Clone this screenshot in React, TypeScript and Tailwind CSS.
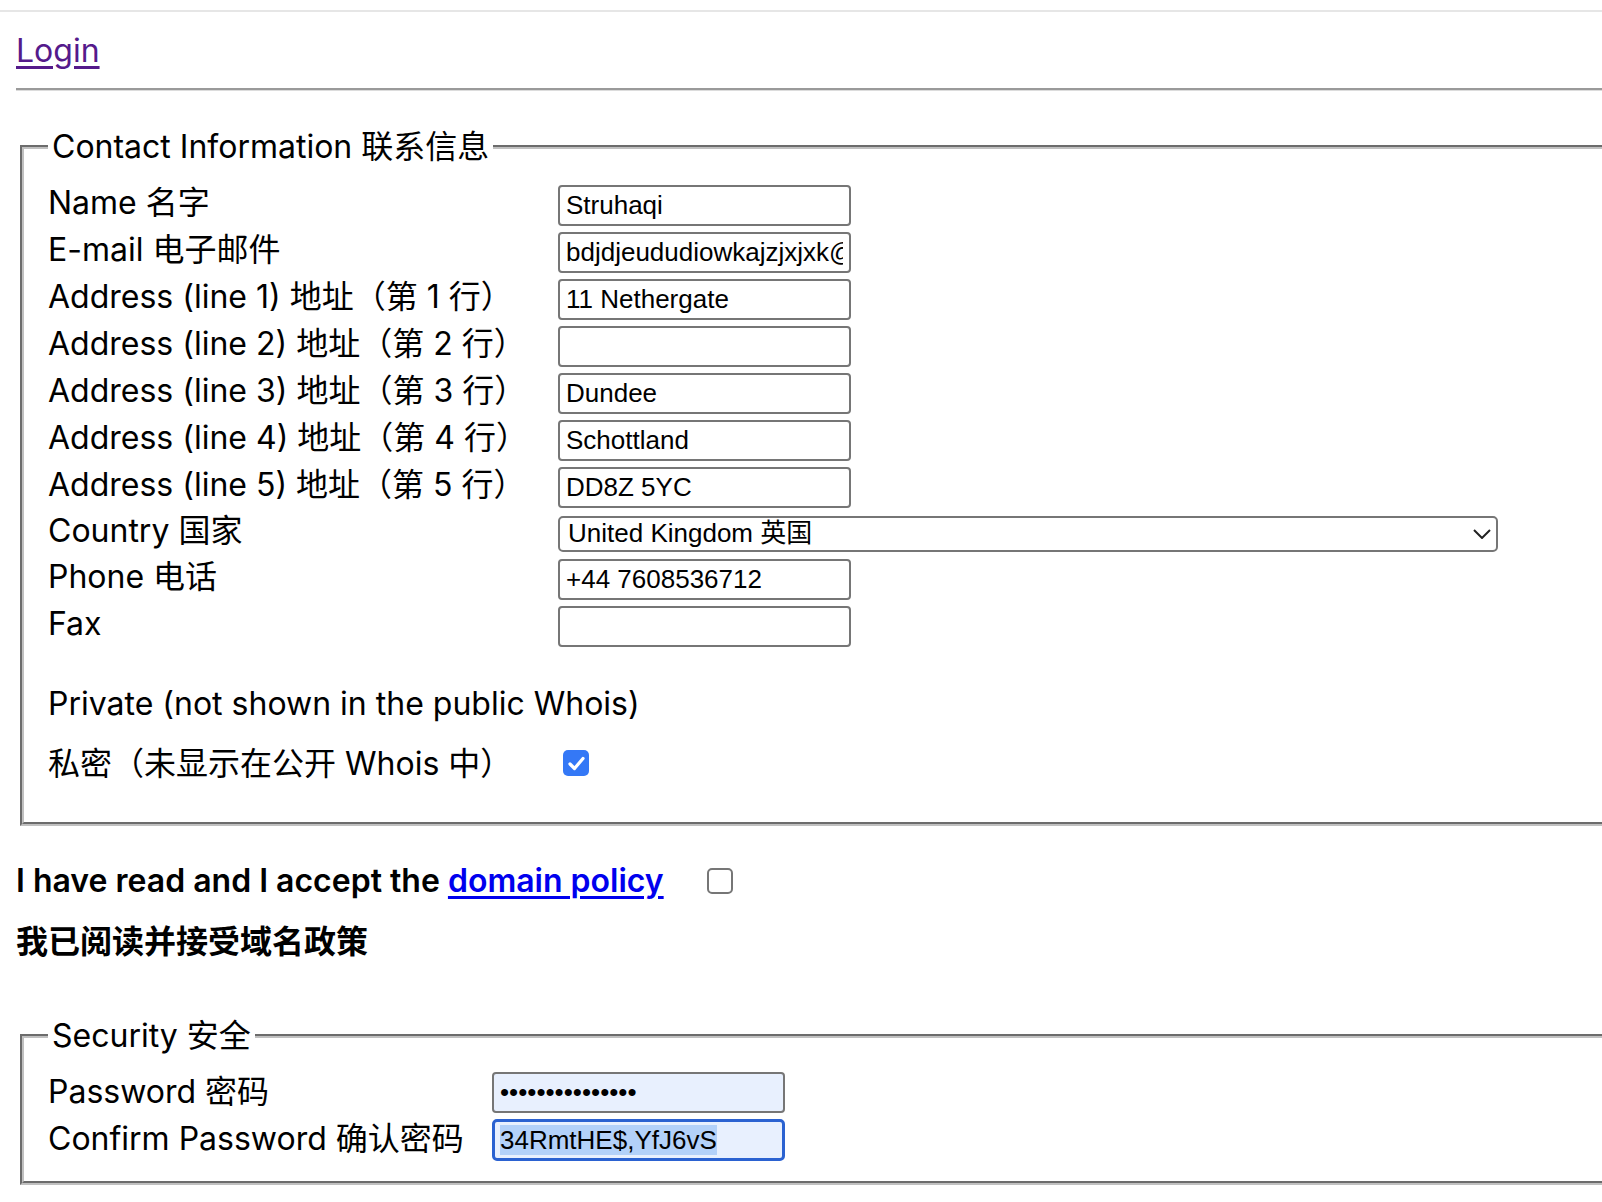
import React from "react";

function TextField({ value }: { value: string }) {
  return (
    <input
      readOnly
      value={value}
      className="w-[293px] h-[41px] border-2 border-[#767676] rounded-[4px] px-[6px] text-[26px] text-black bg-white outline-none font-['Liberation_Sans','Noto_Sans_CJK_SC',sans-serif]"
    />
  );
}

function Row({
  label,
  children,
  labelWidth,
  height,
  labelPad = "pb-[6px]",
}: {
  label: string;
  children?: React.ReactNode;
  labelWidth: string;
  height: string;
  labelPad?: string;
}) {
  return (
    <div className={`flex items-center ${height}`}>
      <div className={`${labelWidth} ${labelPad} shrink-0 whitespace-nowrap`}>{label}</div>
      {children}
    </div>
  );
}

export default function App() {
  const rows: [string, string][] = [
    ["Name 名字", "Struhaqi"],
    ["E-mail 电子邮件", "bdjdjeududiowkajzjxjxk@gmail.com"],
    ["Address (line 1) 地址（第 1 行）", "11 Nethergate"],
    ["Address (line 2) 地址（第 2 行）", ""],
    ["Address (line 3) 地址（第 3 行）", "Dundee"],
    ["Address (line 4) 地址（第 4 行）", "Schottland"],
    ["Address (line 5) 地址（第 5 行）", "DD8Z 5YC"],
  ];

  return (
    <div className="w-full h-[1202px] overflow-hidden bg-white text-black text-[32px] font-['Inter','Noto_Sans_CJK_SC',sans-serif]">
      <div className="w-[1660px] pt-[10px]">
        <div className="h-[2px] bg-[#e6e6e6]" />

        <div className="mt-[19px] pl-[16px] leading-[40px]">
          <a href="#" className="text-[#551a8b] underline underline-offset-[4px]">
            Login
          </a>
        </div>

        <div className="mt-[17px] ml-[16px] h-[3px] border-t-2 border-t-[#9a9a9a] border-b border-b-[#dcdcdc]" />

        <fieldset className="mt-[36px] ml-[20px] px-[24px] pt-[15px] pb-[32px] border-4 [border-style:groove] border-[#c0c0c0]">
          <legend className="px-[4px] leading-[40px]">Contact Information 联系信息</legend>
          {rows.map(([label, value]) => (
            <Row key={label} label={label} labelWidth="w-[510px]" height="h-[47px]">
              <TextField value={value} />
            </Row>
          ))}
          <Row label="Country 国家" labelWidth="w-[510px]" height="h-[45px]">
            <div className="w-[940px] h-[36px] border-2 border-[#767676] rounded-[5px] flex items-center justify-between pl-[8px] pr-[5px] text-[26px] font-['Liberation_Sans','Noto_Sans_CJK_SC',sans-serif]">
              <span>United Kingdom 英国</span>
              <svg width="18" height="10" viewBox="0 0 18 10" fill="none">
                <path d="M1 1 L9 9 L17 1" stroke="#222" strokeWidth="2" />
              </svg>
            </div>
          </Row>
          <Row label="Phone 电话" labelWidth="w-[510px]" height="h-[47px]">
            <TextField value="+44 7608536712" />
          </Row>
          <Row label="Fax" labelWidth="w-[510px]" height="h-[47px]">
            <TextField value="" />
          </Row>

          <div className="mt-[33px] h-[47px] flex items-center">
            <div className="pb-[6px]">Private (not shown in the public Whois)</div>
          </div>
          <div className="mt-[13px] h-[47px] flex items-center">
            <div className="w-[510px] shrink-0 pb-[6px]">私密（未显示在公开 Whois 中）</div>
            <div className="ml-[5px] mb-[7px] w-[26px] h-[26px] rounded-[5px] bg-[#3478f6] flex items-center justify-center">
              <svg width="17" height="15" viewBox="0 0 17 15" fill="none">
                <path d="M2 8 L6.5 12.5 L15 2.5" stroke="white" strokeWidth="3.2" strokeLinecap="round" strokeLinejoin="round" />
              </svg>
            </div>
          </div>
        </fieldset>

        <div className="mt-[33px] pl-[16px] h-[47px] flex items-center font-semibold">
          <div className="pb-[4px]">
            I have read and I accept the{" "}
            <a href="#" className="text-[#0000ee] underline underline-offset-[4px]">
              domain policy
            </a>
          </div>
          <div className="ml-[43px] mb-[3px] w-[26px] h-[26px] border-2 border-[#767676] rounded-[5px] bg-white" />
        </div>
        <div className="mt-[15px] pl-[16px] h-[47px] flex items-center font-bold">
          <div className="pb-[6px]">我已阅读并接受域名政策</div>
        </div>

        <fieldset className="mt-[48px] ml-[20px] px-[24px] pt-[13px] pb-[18px] border-4 [border-style:groove] border-[#c0c0c0]">
          <legend className="px-[4px] leading-[40px]">Security 安全</legend>
          <Row label="Password 密码" labelWidth="w-[444px]" height="h-[47px]" labelPad="pb-[2px]">
            <input
              type="password"
              readOnly
              value="abcdefghijklmno"
              className="w-[293px] h-[41px] border-2 border-[#767676] rounded-[4px] px-[6px] text-[26px] text-black bg-[#e8f0fe] outline-none font-['Liberation_Sans',sans-serif]"
            />
          </Row>
          <Row label="Confirm Password 确认密码" labelWidth="w-[444px]" height="h-[47px]" labelPad="pb-[2px]">
            <div className="w-[293px] h-[42px] border-[3px] border-[#2b62d1] rounded-[5px] bg-[#e8f0fe] flex items-center pl-[5px] text-[26px] font-['Liberation_Sans',sans-serif]">
              <span className="bg-[#b3d1f9] leading-[30px]">34RmtHE$,YfJ6vS</span>
            </div>
          </Row>
        </fieldset>
      </div>
    </div>
  );
}
